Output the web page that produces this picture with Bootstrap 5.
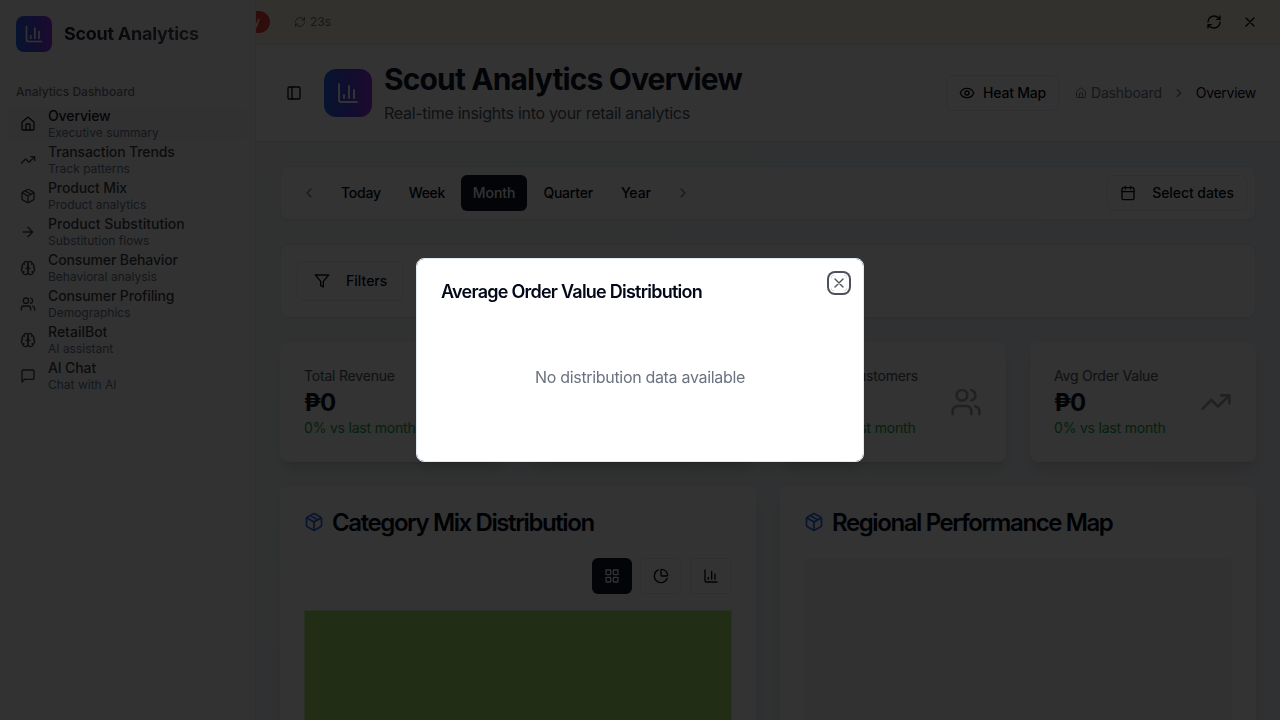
<!DOCTYPE html>
<html lang="en">
<head>
<meta charset="utf-8">
<meta name="viewport" content="width=device-width, initial-scale=1">
<title>Scout Analytics</title>
<link href="https://cdn.jsdelivr.net/npm/bootstrap@5.3.0/dist/css/bootstrap.min.css" rel="stylesheet">
<style>
  body { font-family: Inter, "Liberation Sans", sans-serif; font-size: 14px; line-height: 20px; color: #020817; height: 100vh; overflow: hidden; }
  .ic { width: 16px; height: 16px; fill: none; stroke: currentColor; stroke-width: 2; stroke-linecap: round; stroke-linejoin: round; flex: none; }
  .ic-12 { width: 12px; height: 12px; }
  .ic-14 { width: 14px; height: 14px; }
  .ic-20 { width: 20px; height: 20px; }
  .ic-24 { width: 24px; height: 24px; }
  .ic-32 { width: 32px; height: 32px; }
  .ic-faint { opacity: .5; }
  .brand-tile { width: 36px; height: 36px; border-radius: 8px; background: linear-gradient(to right, #2563eb, #4f46e5 50%, #9333ea); color: #fff; }
  .brand-tile-lg { width: 48px; height: 48px; border-radius: 12px; margin-left: 22px; }
  .side { width: 256px; background: #fafafa; border-right: 1px solid #e5e7eb; }
  .brand-text { font-size: 18px; line-height: 28px; font-weight: 700; letter-spacing: -.27px; background: linear-gradient(to right, #111827, #4b5563); -webkit-background-clip: text; background-clip: text; color: transparent; }
  .side-label { font-size: 12px; line-height: 16px; font-weight: 500; color: #71717a; margin-top: 32px; }
  .side-menu { margin-top: 8px; gap: 4px; }
  .side-item { height: 32px; padding: 0 12px; gap: 12px; border-radius: 6px; color: #3f3f46; }
  .side-item.active { background: #f4f4f5; color: #18181b; }
  .side-item strong { display: block; font-weight: 500; line-height: 17px; margin-top: -1px; padding-bottom: 1px; letter-spacing: -.12px; }
  .side-item .as-is { letter-spacing: 0; }
  .side-item span { display: block; font-size: 12px; line-height: 15px; color: #64748b; }
  .page-area { background: linear-gradient(135deg, #f2f6f5, #f1f3fa); }
  .alert-strip { height: 45px; background: #fdf5e2; border-bottom: 1px solid #e2e8f0; padding-right: 22px; }
  .strip-tools { gap: 20px; }
  .pill-end { width: 14px; height: 22px; border-radius: 0 11px 11px 0; background: #ef4444; color: #fff; font-size: 12px; line-height: 22px; font-weight: 600; padding-right: 10px; direction: rtl; }
  .timer { font-size: 12px; color: #64748b; margin-left: 24px; gap: 4px; }
  .page-head { height: 97px; background: #fff; border-bottom: 1px solid #e2e8f0; padding: 0 24px 0 30px; }
  .page-title { font-size: 30px; line-height: 36px; font-weight: 700; letter-spacing: -.87px; color: #0f172a; margin: 0; }
  .page-sub { font-size: 16px; line-height: 24px; letter-spacing: -.3px; color: #4b5563; }
  .crumb { letter-spacing: -.15px; }
  .crumb-muted { color: #64748b; }
  .crumb-here { letter-spacing: -.3px; }
  .crumb-sep { margin: 0 10px; }
  .tool { height: 36px; padding: 0 12px; border-radius: 6px; border: 0; display: inline-flex; align-items: center; justify-content: center; font-size: 14px; font-weight: 500; color: #020817; background: transparent; }
  .tool-line { border: 1px solid #e2e8f0; background: #fff; }
  .tool-dark { background: #0f172a; color: #f8fafc; }
  .tool-tall { height: 40px; }
  .snug { letter-spacing: -.07px; }
  .tight { letter-spacing: -.22px; }
  .tighter { letter-spacing: -.4px; }
  .panel { background: #fbfcfb; border: 1px solid #e2e8f0; border-radius: 8px; box-shadow: 0 1px 2px rgba(0,0,0,.05); }
  .tile-card { background: #fbfcfb; border-radius: 8px; padding: 24px; box-shadow: 0 10px 15px -3px rgba(0,0,0,.1), 0 4px 6px -4px rgba(0,0,0,.1); letter-spacing: -.2px; }
  .tile-label { color: #4b5563; }
  .tile-value { font-size: 24px; line-height: 32px; font-weight: 700; letter-spacing: -1.2px; padding-top: 1px; margin-bottom: -1px; color: #111827; }
  .tile-delta { color: #16a34a; }
  .tile-icon { color: #9ca3af; }
  .dash-grid { display: grid; gap: 24px; }
  .cols-4 { grid-template-columns: repeat(4, 1fr); }
  .cols-2 { grid-template-columns: repeat(2, 1fr); }
  .chart-title { font-size: 24px; line-height: 24px; font-weight: 600; letter-spacing: -1.4px; margin: 0 0 24px; }
  .chart-title span { padding-top: 1px; margin-bottom: -1px; }
  .chart-title .ic { color: #2563eb; }
  .treemap { height: 320px; background: #a4de6c; border: 1px solid #d1eeb5; }
  .map-box { height: 400px; border-radius: 8px; background: #f3f3f3; }
  .modal-backdrop { --bs-backdrop-opacity: .8; }
  .dist-dialog { max-width: 448px; }
  .dist-content { border: 1px solid #e2e8f0; border-radius: 8px; padding: 24px; box-shadow: 0 10px 15px -3px rgba(0,0,0,.1), 0 4px 6px -4px rgba(0,0,0,.1); color: #020817; }
  .dist-title { font-size: 18px; line-height: 18px; font-weight: 600; letter-spacing: -.76px; margin: 0 0 16px; }
  .dist-empty { height: 120px; font-size: 16px; line-height: 24px; letter-spacing: -.32px; color: #6b7280; }
  .dist-close { top: 16px; right: 16px; width: 16px; height: 16px; padding: 0; border: 0; border-radius: 4px; background: none; color: #020817; opacity: .7; display: flex; box-shadow: 0 0 0 2px #fff, 0 0 0 4px #020817; }
</style>
</head>
<body>
<svg class="d-none">
  <symbol id="chart" viewBox="0 0 24 24"><path d="M3 3v16a2 2 0 0 0 2 2h16M18 17V9M13 17V5M8 17v-3"/></symbol>
  <symbol id="home" viewBox="0 0 24 24"><path d="M15 21v-8a1 1 0 0 0-1-1h-4a1 1 0 0 0-1 1v8"/><path d="M3 10a2 2 0 0 1 .709-1.528l7-5.999a2 2 0 0 1 2.582 0l7 5.999A2 2 0 0 1 21 10v9a2 2 0 0 1-2 2H5a2 2 0 0 1-2-2z"/></symbol>
  <symbol id="trend" viewBox="0 0 24 24"><path d="M22 7l-8.500 8.500-5-5L2 17M16 7h6v6"/></symbol>
  <symbol id="package" viewBox="0 0 24 24"><path d="m7.500 4.270 9 5.150M21 8a2 2 0 0 0-1-1.730l-7-4a2 2 0 0 0-2 0l-7 4A2 2 0 0 0 3 8v8a2 2 0 0 0 1 1.730l7 4a2 2 0 0 0 2 0l7-4A2 2 0 0 0 21 16ZM3.300 7l8.700 5 8.700-5M12 22V12"/></symbol>
  <symbol id="arrow" viewBox="0 0 24 24"><path d="M5 12h14M12 5l7 7-7 7"/></symbol>
  <symbol id="brain" viewBox="0 0 24 24"><path d="M12 5a3 3 0 1 0-5.997.125 4 4 0 0 0-2.526 5.770 4 4 0 0 0 .556 6.588A4 4 0 1 0 12 18Z"/><path d="M12 5a3 3 0 1 1 5.997.125 4 4 0 0 1 2.526 5.770 4 4 0 0 1-.556 6.588A4 4 0 1 1 12 18Z"/><path d="M15 13a4.500 4.500 0 0 1-3-4 4.500 4.500 0 0 1-3 4M17.599 6.500a3 3 0 0 0 .399-1.375M6.003 5.125A3 3 0 0 0 6.401 6.500M3.477 10.896a4 4 0 0 1 .585-.396M19.938 10.500a4 4 0 0 1 .585.396M6 18a4 4 0 0 1-1.967-.516M19.967 17.484A4 4 0 0 1 18 18"/></symbol>
  <symbol id="users" viewBox="0 0 24 24"><path d="M16 21v-2a4 4 0 0 0-4-4H6a4 4 0 0 0-4 4v2M22 21v-2a4 4 0 0 0-3-3.870M16 3.130a4 4 0 0 1 0 7.750"/><circle cx="9" cy="7" r="4"/></symbol>
  <symbol id="chat" viewBox="0 0 24 24"><path d="M21 15a2 2 0 0 1-2 2H7l-4 4V5a2 2 0 0 1 2-2h14a2 2 0 0 1 2 2z"/></symbol>
  <symbol id="refresh" viewBox="0 0 24 24"><path d="M3 12a9 9 0 0 1 9-9 9.750 9.750 0 0 1 6.740 2.740L21 8M21 3v5h-5M21 12a9 9 0 0 1-9 9 9.750 9.750 0 0 1-6.740-2.740L3 16M8 16H3v5"/></symbol>
  <symbol id="close" viewBox="0 0 24 24"><path d="M18 6 6 18M6 6l12 12"/></symbol>
  <symbol id="panel" viewBox="0 0 24 24"><rect width="18" height="18" x="3" y="3" rx="2"/><path d="M9 3v18"/></symbol>
  <symbol id="eye" viewBox="0 0 24 24"><path d="M2.062 12.348a1 1 0 0 1 0-.696 10.750 10.750 0 0 1 19.876 0 1 1 0 0 1 0 .696 10.750 10.750 0 0 1-19.876 0"/><circle cx="12" cy="12" r="3"/></symbol>
  <symbol id="left" viewBox="0 0 24 24"><path d="m15 18-6-6 6-6"/></symbol>
  <symbol id="right" viewBox="0 0 24 24"><path d="m9 18 6-6-6-6"/></symbol>
  <symbol id="calendar" viewBox="0 0 24 24"><path d="M8 2v4M16 2v4M3 10h18"/><rect width="18" height="18" x="3" y="4" rx="2"/></symbol>
  <symbol id="funnel" viewBox="0 0 24 24"><path d="M22 3H2l8 9.460V19l4 2v-8.540z"/></symbol>
  <symbol id="tiles" viewBox="0 0 24 24"><rect width="7" height="7" x="3" y="3" rx="1"/><rect width="7" height="7" x="14" y="3" rx="1"/><rect width="7" height="7" x="14" y="14" rx="1"/><rect width="7" height="7" x="3" y="14" rx="1"/></symbol>
  <symbol id="pie" viewBox="0 0 24 24"><path d="M21 12c.552 0 1.005-.449.950-.998a10 10 0 0 0-8.953-8.951c-.550-.055-.998.398-.998.950v8a1 1 0 0 0 1 1zM21.210 15.890A10 10 0 1 1 8 2.830"/></symbol>
</svg>

<div class="d-flex h-100">
  <aside class="side flex-shrink-0">
    <div class="d-flex align-items-center gap-2 p-3 pb-0">
      <div class="brand-tile d-flex align-items-center justify-content-center me-1"><svg class="ic ic-20"><use href="#chart"/></svg></div>
      <div class="brand-text">Scout Analytics</div>
    </div>
    <div class="side-label px-3">Analytics Dashboard</div>
    <nav class="side-menu d-flex flex-column px-2">
      <div class="side-item active d-flex align-items-center"><svg class="ic"><use href="#home"/></svg><div><strong>Overview</strong><span>Executive summary</span></div></div>
      <div class="side-item d-flex align-items-center"><svg class="ic"><use href="#trend"/></svg><div><strong>Transaction Trends</strong><span>Track patterns</span></div></div>
      <div class="side-item d-flex align-items-center"><svg class="ic"><use href="#package"/></svg><div><strong>Product Mix</strong><span>Product analytics</span></div></div>
      <div class="side-item d-flex align-items-center"><svg class="ic"><use href="#arrow"/></svg><div><strong class="as-is">Product Substitution</strong><span>Substitution flows</span></div></div>
      <div class="side-item d-flex align-items-center"><svg class="ic"><use href="#brain"/></svg><div><strong>Consumer Behavior</strong><span>Behavioral analysis</span></div></div>
      <div class="side-item d-flex align-items-center"><svg class="ic"><use href="#users"/></svg><div><strong>Consumer Profiling</strong><span>Demographics</span></div></div>
      <div class="side-item d-flex align-items-center"><svg class="ic"><use href="#brain"/></svg><div><strong class="as-is">RetailBot</strong><span>AI assistant</span></div></div>
      <div class="side-item d-flex align-items-center"><svg class="ic"><use href="#chat"/></svg><div><strong>AI Chat</strong><span>Chat with AI</span></div></div>
    </nav>
  </aside>

  <div class="page-area flex-grow-1 overflow-hidden">
    <div class="alert-strip d-flex align-items-center">
      <span class="pill-end overflow-hidden">y</span>
      <span class="timer d-flex align-items-center"><svg class="ic ic-12"><use href="#refresh"/></svg>23s</span>
      <span class="strip-tools ms-auto d-flex"><svg class="ic"><use href="#refresh"/></svg><svg class="ic"><use href="#close"/></svg></span>
    </div>

    <header class="page-head d-flex align-items-center">
      <svg class="ic"><use href="#panel"/></svg>
      <div class="brand-tile brand-tile-lg d-flex align-items-center justify-content-center"><svg class="ic ic-24"><use href="#chart"/></svg></div>
      <div class="ps-2 ms-1">
        <h1 class="page-title">Scout Analytics Overview</h1>
        <div class="page-sub mt-1">Real-time insights into your retail analytics</div>
      </div>
      <div class="ms-auto d-flex align-items-center gap-3">
        <button class="tool tool-line gap-2 tight"><svg class="ic"><use href="#eye"/></svg>Heat Map</button>
        <div class="crumb d-flex align-items-center">
          <span class="crumb-muted d-flex align-items-center gap-1"><svg class="ic ic-12"><use href="#home"/></svg>Dashboard</span>
          <svg class="ic ic-14 crumb-sep crumb-muted"><use href="#right"/></svg>
          <span class="crumb-here">Overview</span>
        </div>
      </div>
    </header>

    <main class="dash-grid p-4">
      <section class="panel d-flex justify-content-between p-2">
        <div class="d-flex">
          <button class="tool"><svg class="ic ic-faint"><use href="#left"/></svg></button>
          <div class="d-flex gap-1">
            <button class="tool tight">Today</button><button class="tool tighter">Week</button><button class="tool tool-dark snug">Month</button><button class="tool tight">Quarter</button><button class="tool snug">Year</button>
          </div>
          <button class="tool"><svg class="ic ic-faint"><use href="#right"/></svg></button>
        </div>
        <button class="tool tool-line gap-3 snug"><svg class="ic"><use href="#calendar"/></svg>Select dates</button>
      </section>

      <section class="panel p-3">
        <button class="tool tool-line tool-tall gap-3 px-3"><svg class="ic"><use href="#funnel"/></svg>Filters</button>
      </section>

      <section class="dash-grid cols-4">
        <div class="tile-card d-flex align-items-center justify-content-between">
          <div><div class="tile-label">Total Revenue</div><div class="tile-value">₱0</div><div class="tile-delta">0% vs last month</div></div>
        </div>
        <div class="tile-card"></div>
        <div class="tile-card d-flex align-items-center justify-content-between">
          <div><div class="tile-label">Active Customers</div><div class="tile-value">0</div><div class="tile-delta">0% vs last month</div></div>
          <svg class="ic ic-32 tile-icon"><use href="#users"/></svg>
        </div>
        <div class="tile-card d-flex align-items-center justify-content-between">
          <div><div class="tile-label">Avg Order Value</div><div class="tile-value">₱0</div><div class="tile-delta">0% vs last month</div></div>
          <svg class="ic ic-32 tile-icon"><use href="#trend"/></svg>
        </div>
      </section>

      <section class="dash-grid cols-2">
        <div class="tile-card">
          <h2 class="chart-title d-flex align-items-center gap-2"><svg class="ic ic-20"><use href="#package"/></svg><span>Category Mix Distribution</span></h2>
          <div class="d-flex justify-content-end gap-2">
            <button class="tool tool-dark"><svg class="ic"><use href="#tiles"/></svg></button>
            <button class="tool tool-line"><svg class="ic"><use href="#pie"/></svg></button>
            <button class="tool tool-line"><svg class="ic"><use href="#chart"/></svg></button>
          </div>
          <div class="treemap mt-3"></div>
        </div>
        <div class="tile-card">
          <h2 class="chart-title d-flex align-items-center gap-2"><svg class="ic ic-20"><use href="#package"/></svg><span>Regional Performance Map</span></h2>
          <div class="map-box"></div>
        </div>
      </section>
    </main>
  </div>
</div>

<div class="modal-backdrop show"></div>
<div class="modal show d-block" tabindex="-1" role="dialog" aria-modal="true">
  <div class="modal-dialog modal-dialog-centered dist-dialog">
    <div class="modal-content dist-content">
      <h2 class="dist-title">Average Order Value Distribution</h2>
      <div class="dist-empty d-flex align-items-center justify-content-center">No distribution data available</div>
      <button class="dist-close position-absolute" aria-label="Close"><svg class="ic"><use href="#close"/></svg></button>
    </div>
  </div>
</div>
<script src="https://cdn.jsdelivr.net/npm/bootstrap@5.3.0/dist/js/bootstrap.bundle.min.js"></script>
</body>
</html>
